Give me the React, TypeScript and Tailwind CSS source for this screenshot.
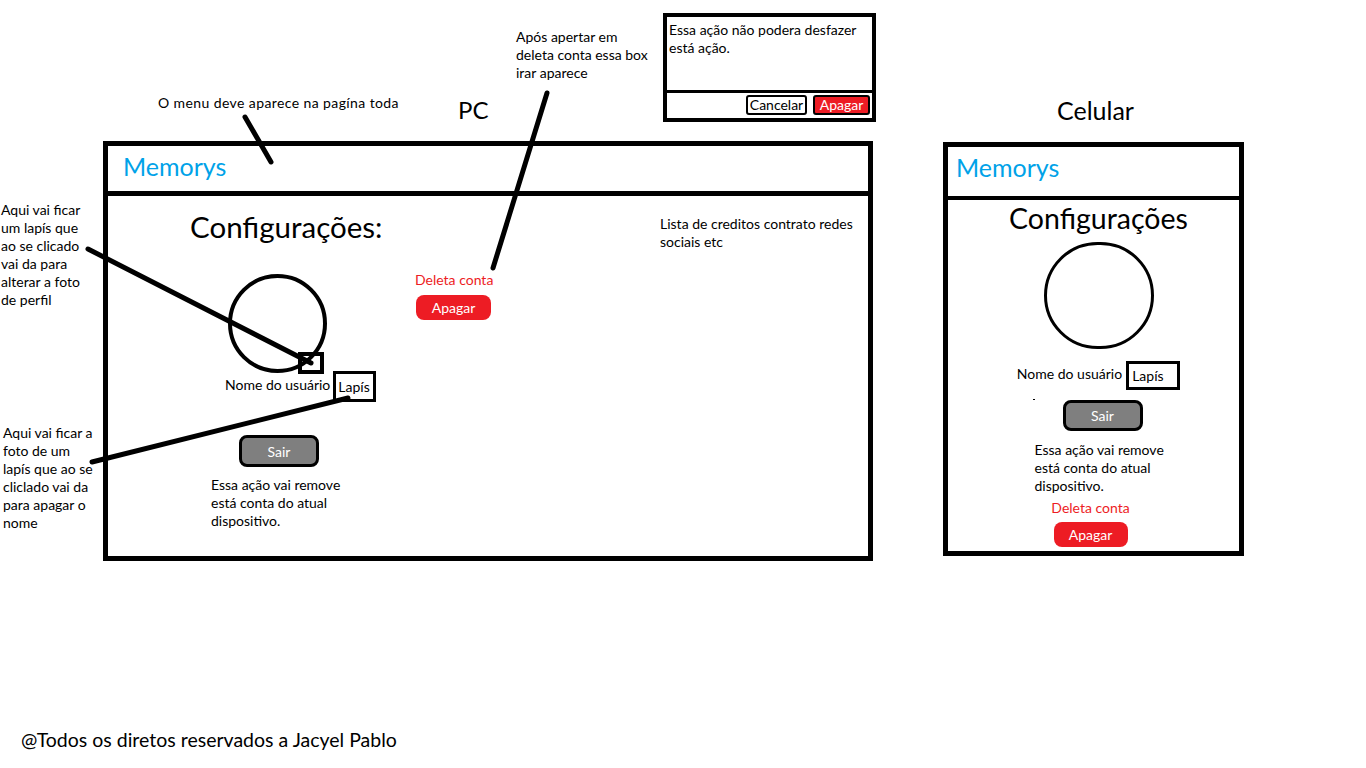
import React from "react";

const font = { fontFamily: "Lato, 'Open Sans', 'Liberation Sans', sans-serif" };

function PcFrame() {
  return (
    <div className="w-[770px] h-[420px] border-[5px] border-black flex flex-col shrink-0">
      <div className="h-[50px] border-b-[5px] border-black flex items-center pl-[15px]">
        <span className="text-[25px] text-[#00a2e8] leading-none -mt-[4px]">Memorys</span>
      </div>
      <div className="flex flex-1 items-start">
        <div className="w-[307px] flex flex-col items-start">
          <div className="ml-[82px] mt-[13px] text-[29.5px] leading-[36px] text-black">Configurações:</div>
          <div className="relative ml-[120px] mt-[29px] w-[99px] h-[99px] rounded-full border-[4px] border-black">
            <div className="absolute left-[66px] top-[74px] w-[26px] h-[22px] border-[4px] border-black bg-transparent" />
          </div>
          <div className="flex items-center ml-[117px] -mt-[2px]">
            <span className="text-[14px] leading-[18px] mt-[-4px]">Nome do usuário</span>
            <div className="ml-[3px] w-[43px] h-[31px] border-[3px] border-black flex items-center pl-[2px] text-[14px]">Lapís</div>
          </div>
          <div className="ml-[131px] mt-[33px] w-[80px] h-[32px] rounded-[8px] border-[3px] border-black bg-[#7f7f7f] flex items-center justify-center text-white text-[14px]">
            Sair
          </div>
          <div className="ml-[103px] mt-[9px] text-[14px] leading-[18px] w-[150px]">
            Essa ação vai remove está conta do atual dispositivo.
          </div>
        </div>
        <div className="w-[245px] flex flex-col items-start">
          <div className="mt-[75px] text-[14px] leading-[18px] text-[#ed1c24]">Deleta conta</div>
          <div className="ml-[1px] mt-[6px] w-[75px] h-[25px] rounded-[8px] bg-[#ed1c24] text-white text-[14px] flex items-center justify-center">
            Apagar
          </div>
        </div>
        <div className="mt-[19px] w-[205px] text-[14px] leading-[18px]">
          Lista de creditos contrato redes sociais etc
        </div>
      </div>
    </div>
  );
}

function PhoneFrame() {
  return (
    <div className="ml-[70px] mt-[1px] w-[301px] h-[414px] border-[5px] border-black flex flex-col shrink-0">
      <div className="h-[53px] border-b-[4px] border-black flex items-center pl-[8px]">
        <span className="text-[25px] text-[#00a2e8] leading-none -mt-[8px]">Memorys</span>
      </div>
      <div className="flex flex-col items-center pl-[10px]">
        <div className="mt-[1px] text-[28.5px] leading-[34px]">Configurações</div>
        <div className="mt-[7px] w-[110px] h-[107px] rounded-full border-[3px] border-black" />
        <div className="flex items-center mt-[12px]">
          <span className="text-[14px] leading-[18px] -mt-[4px]">Nome do usuário</span>
          <div className="ml-[4px] w-[54px] h-[29px] border-[3px] border-black flex items-center pl-[3px] text-[14px]">Lapís</div>
        </div>
        <div className="mt-[10px] ml-[8px] w-[80px] h-[31px] rounded-[8px] border-[3px] border-black bg-[#7f7f7f] flex items-center justify-center text-white text-[14px]">
          Sair
        </div>
        <div className="mt-[10px] ml-[22px] w-[150px] text-[14px] leading-[18px]">
          Essa ação vai remove está conta do atual dispositivo.
        </div>
        <div className="mt-[4px] text-[14px] leading-[18px] text-[#ed1c24] mr-[16px]">Deleta conta</div>
        <div className="mt-[5px] w-[74px] h-[25px] rounded-[8px] bg-[#ed1c24] text-white text-[14px] flex items-center justify-center mr-[16px]">
          Apagar
        </div>
      </div>
    </div>
  );
}

export default function App() {
  return (
    <div className="relative w-[1366px] h-[768px] bg-white text-black overflow-hidden" style={font}>
      <div className="flex items-start pt-[141px] pl-[103px]">
        <PcFrame />
        <PhoneFrame />
      </div>

      {/* annotations */}
      <div className="absolute left-[158px] top-[94px] text-[14px] leading-[18px] tracking-[0.4px]">O menu deve aparece na pagína toda</div>
      <div className="absolute left-[458px] top-[96px] text-[24px] leading-[28px]">PC</div>
      <div className="absolute left-[1057px] top-[96px] text-[25px] leading-[28px]">Celular</div>
      <div className="absolute left-[516px] top-[28px] w-[140px] text-[14px] leading-[18px]">
        Após apertar em deleta conta essa box irar aparece
      </div>
      <div className="absolute left-[1px] top-[201px] w-[90px] text-[14px] leading-[18px]">
        Aqui vai ficar um lapís que ao se clicado vai da para alterar a foto de perfil
      </div>
      <div className="absolute left-[3px] top-[424px] w-[95px] text-[14px] leading-[18px]">
        Aqui vai ficar a foto de um lapís que ao se cliclado vai da para apagar o nome
      </div>
      <div className="absolute left-[21px] top-[728px] text-[19.5px] leading-[24px]">@Todos os diretos reservados a Jacyel Pablo</div>

      {/* dialog */}
      <div className="absolute left-[663px] top-[13px] w-[213px] h-[109px] border-[4px] border-black flex flex-col">
        <div className="h-[76px] border-b-[3px] border-black px-[2px] pt-[4px] text-[14px] leading-[18px]">
          Essa ação não podera desfazer está ação.
        </div>
        <div className="flex flex-1 items-center justify-end gap-[6px] pr-[2px] -mt-[1px]">
          <div className="w-[61px] h-[20px] border-[2px] border-black rounded-[3px] bg-white text-[14px] leading-none flex items-center justify-center">Cancelar</div>
          <div className="w-[57px] h-[20px] border-[2px] border-black rounded-[3px] bg-[#ed1c24] text-white text-[14px] leading-none flex items-center justify-center">Apagar</div>
        </div>
      </div>

      {/* pointer lines */}
      <svg className="absolute inset-0 pointer-events-none" width="1366" height="768">
        <g stroke="black" strokeWidth="5" strokeLinecap="round">
          <line x1="245" y1="117" x2="271" y2="162" />
          <line x1="547" y1="93" x2="493" y2="268" />
          <line x1="88" y1="249" x2="311" y2="363" />
          <line x1="92" y1="462" x2="348" y2="398" />
        </g>
        <rect x="1033" y="399" width="2" height="1" fill="black" />
      </svg>
    </div>
  );
}
